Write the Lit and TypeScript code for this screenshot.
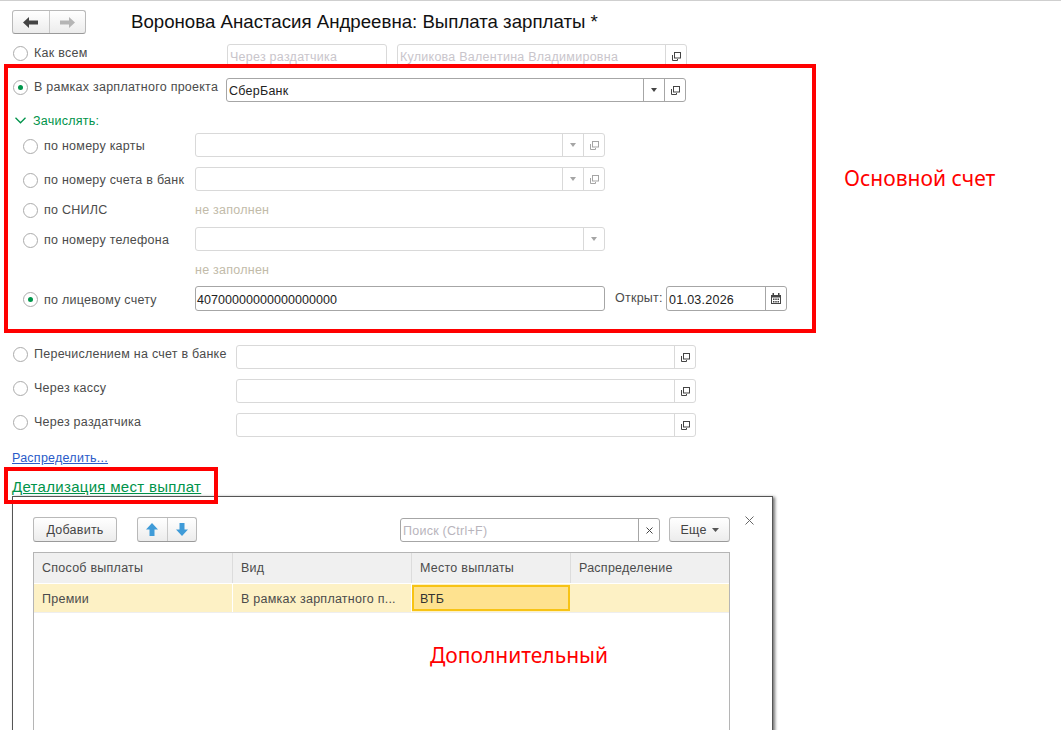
import { LitElement, html, css, svg } from "lit";
import { customElement } from "lit/decorators.js";

const openIcon = svg`<svg class="ic" width="9" height="9" viewBox="0 0 9 9" fill="none" stroke="currentColor"><rect x="2.5" y=".5" width="6" height="5.5"/><path d="M.5 3v5.5h5V7"/></svg>`;
const tri = svg`<svg class="ic" width="6" height="4" viewBox="0 0 6 4" fill="currentColor"><path d="M0 0h6L3 4z"/></svg>`;
const cal = svg`<svg class="ic" width="10" height="11" viewBox="0 0 10 11" fill="currentColor"><path d="M0 2h1.500V0h1.500v2h4V0h1.500v2H10v9H0zM1 4.500v5.500h8V4.500z"/><path d="M2 5.500h1.500v1.500H2zM4.250 5.500h1.500v1.500h-1.500zM6.500 5.500H8v1.500H6.500zM2 8h1.500v1.500H2zM4.250 8h1.500v1.500h-1.500zM6.500 8H8v1.500H6.500z"/></svg>`;

type Btn = "tri" | "open" | "cal" | "x";

@customElement("app-root")
export class AppRoot extends LitElement {
  static styles = css`
    :host {
      display: block; position: relative; width: 1061px; height: 730px; overflow: hidden;
      background: #fff; font-family: "Liberation Sans", Arial, sans-serif; font-size: 12.5px; color: #4b4b4b;
      letter-spacing: .25px;
    }
    * { box-sizing: border-box; }
    .topline { height: 1px; background: #cfcfcf; }
    .head { display: flex; align-items: center; padding: 9px 0 0 12px; height: 33px; }
    .nav { display: flex; width: 74px; height: 24px; border: 1px solid #b9b9b9; border-bottom-color: #9a9a9a; border-radius: 3px; background: linear-gradient(#fff, #ececec); }
    .nav span { flex: 1; display: flex; align-items: center; justify-content: center; }
    .nav span + span { border-left: 1px solid #c8c8c8; }
    .title { margin-left: 45px; font-size: 18.67px; color: #111; letter-spacing: 0; white-space: nowrap; }
    .row { display: flex; margin-left: 12px; }
    .h24 { height: 24px; }
    .h25 { height: 25px; }
    .h16 { height: 16px; align-items: center; }
    .mt5 { margin-top: 5px; }
    .mt9 { margin-top: 9px; }
    .mt10 { margin-top: 10px; }
    .mt12 { margin-top: 12px; }
    .mt34 { margin-top: 34px; }
    .sub { margin-left: 23px; align-items: center; }
    .radio { flex: none; width: 15px; height: 15px; margin-left: 1px; border: 1px solid #ababab; border-radius: 50%; background: #fff; display: flex; align-items: center; justify-content: center; }
    .sub .radio { margin-left: 0; }
    .radio.on::after { content: ""; width: 5px; height: 5px; border-radius: 50%; background: #00964b; }
    .opt { display: flex; align-items: center; height: 17px; padding-top: 1px; gap: 6px; white-space: nowrap; }
    .sub .opt { height: 18px; padding-top: 2px; }
    .lab-a { width: 215px; }
    .lab-b { width: 214px; }
    .lab-c { width: 224px; }
    .lab-s { width: 172px; flex: none; }
    .hint { color: #c2bba9; line-height: 18px; padding-top: 2px; }
    .field { display: flex; height: 100%; border: 1px solid #d9d9d9; border-radius: 3px; background: #fff; align-items: center; overflow: hidden; color: #c9c5cb; }
    .field.act { border-color: #a6a6a6; color: #222; }
    .field .v { flex: 1; padding: 2px 0 0 2px; white-space: nowrap; overflow: hidden; min-width: 0; }
    .field.num .v { letter-spacing: .05px; padding-left: 1px; }
    .field .b { flex: none; width: 21px; height: 100%; border-left: 1px solid #d9d9d9; display: flex; align-items: center; justify-content: center; color: #a5a5a5; }
    .field.act .b { border-left-color: #a6a6a6; color: #444; }
    .field.dark .b { color: #444; }
    .f160 { width: 160px; }
    .f289 { width: 290px; margin-left: 10px; }
    .f460 { width: 460px; }
    .f410 { width: 410px; }
    .f121 { width: 121px; }
    .open-l { flex: none; width: 51px; margin-left: 10px; line-height: 25px; white-space: nowrap; }
    .ic { display: block; }
    .green { color: #00934a; margin-left: 3px; gap: 7px; }
    .link { color: #2a5bc9; text-decoration: underline; white-space: nowrap; padding-top: 2px; }
    .detail { margin: 13px 0 0 12px; height: 18px; font-size: 15px; line-height: 17px; color: #00934a; text-decoration: underline; letter-spacing: .3px; white-space: nowrap; }
    .win { position: relative; margin-left: 12px; width: 761px; height: 240px; border: 1px solid #555; border-bottom: 0; background: #fff; box-shadow: 2px 1px 3px rgba(0,0,0,.55); padding: 20px 42px 0 20px; }
    .close { position: absolute; left: 731px; top: 18px; width: 11px; height: 11px; color: #666; }
    .tb { display: flex; height: 25px; }
    .btn { height: 25px; border: 1px solid #b9b9b9; border-bottom-color: #9a9a9a; border-radius: 3px; background: linear-gradient(#fff, #ececec); display: flex; align-items: center; justify-content: center; color: #444; }
    .add { width: 84px; }
    .updown { width: 60px; margin-left: 20px; padding: 0; }
    .updown span { flex: 1; height: 100%; display: flex; align-items: center; justify-content: center; }
    .updown span + span { border-left: 1px solid #c8c8c8; }
    .search { width: 260px; margin-left: 203px; height: 24px; margin-top: 1px; }
    .search.field .v { color: #b8b4bc; }
    .more { width: 61px; margin-left: 9px; gap: 5px; }
    .tbl { margin-top: 10px; height: 200px; border: 1px solid #b5b5b5; border-bottom: 0; }
    .tr { display: grid; grid-template-columns: 199px 179px 159px 1fr; }
    .th { height: 31px; background: #f0f0f0; border-bottom: 1px solid #fff; }
    .th div { display: flex; align-items: center; padding-left: 8px; border-right: 1px solid #dcdcdc; padding-bottom: 1px; }
    .th div:last-child { border-right: 0; }
    .td { height: 29px; background: #fdf1c5; border-bottom: 1px solid #eee; }
    .td div { display: flex; align-items: center; padding: 2px 0 0 8px; border-right: 1px solid #fff; white-space: nowrap; overflow: hidden; }
    .td div:last-child { border-right: 0; }
    .td .sel { background: #fee28f; border: 2px solid #f7c315; padding: 1px 0 0 6px; color: #333; margin: 1px 1px 0 0; height: 26px; }
    .red { position: absolute; border: 4px solid #ff0000; pointer-events: none; }
    .r1 { left: 4px; top: 64px; width: 812px; height: 269px; }
    .r2 { left: 4px; top: 467px; width: 214px; height: 37px; }
    .ann { position: absolute; color: #ff0000; font-family: "Noto Sans", sans-serif; font-size: 21px; letter-spacing: 0; white-space: nowrap; line-height: 24px; }
    .a1 { left: 844px; top: 166px; }
    .a2 { left: 430px; top: 643px; }
  `;

  private field(cls: string, value: string, btns: Btn[]) {
    const icons = { tri, open: openIcon, cal, x: svg`<svg class="ic" width="7" height="7" viewBox="0 0 7 7" stroke="currentColor" fill="none"><path d="M.5.5l6 6M6.5.5l-6 6"/></svg>` };
    return html`<div class="field ${cls}"><div class="v">${value}</div>${btns.map((b) => html`<div class="b">${icons[b]}</div>`)}</div>`;
  }

  private opt(label: string, cls: string, on = false) {
    return html`<div class="opt ${cls}"><span class="radio ${on ? "on" : ""}"></span><span>${label}</span></div>`;
  }

  render() {
    return html`
      <div class="topline"></div>
      <div class="head">
        <div class="nav">
          <span><svg width="15" height="11" viewBox="0 0 15 11" fill="#444"><path d="M0 5.500L6 0v3.500h9v4H6V11z"/></svg></span>
          <span><svg width="15" height="11" viewBox="0 0 15 11" fill="#b5b5b5"><path d="M15 5.500L9 0v3.500H0v4h9V11z"/></svg></span>
        </div>
        <div class="title">Воронова Анастасия Андреевна: Выплата зарплаты *</div>
      </div>

      <div class="row h24 mt10">
        ${this.opt("Как всем", "lab-a")}
        ${this.field("f160", "Через раздатчика", [])}
        ${this.field("f289 dark", "Куликова Валентина Владимировна", ["open"])}
      </div>
      <div class="row h24 mt10">
        ${this.opt("В рамках зарплатного проекта", "lab-b", true)}
        ${this.field("f460 act", "СберБанк", ["tri", "open"])}
      </div>
      <div class="row h16 mt10">
        <div class="opt green">
          <svg width="11" height="7" viewBox="0 0 11 7" fill="none" stroke="#00934a" stroke-width="1.300"><path d="M.5.8l5 5 5-5"/></svg>
          <span>Зачислять:</span>
        </div>
      </div>
      <div class="row sub h24 mt5">
        ${this.opt("по номеру карты", "lab-s")}
        ${this.field("f410", "", ["tri", "open"])}
      </div>
      <div class="row sub h24 mt10">
        ${this.opt("по номеру счета в банк", "lab-s")}
        ${this.field("f410", "", ["tri", "open"])}
      </div>
      <div class="row sub h16 mt10">
        ${this.opt("по СНИЛС", "lab-s")}
        <span class="hint">не заполнен</span>
      </div>
      <div class="row sub h24 mt10">
        ${this.opt("по номеру телефона", "lab-s")}
        ${this.field("f410", "", ["tri"])}
      </div>
      <div class="row sub h16 mt10">
        <div class="lab-s"></div>
        <span class="hint">не заполнен</span>
      </div>
      <div class="row sub h25 mt9">
        ${this.opt("по лицевому счету", "lab-s", true)}
        ${this.field("f410 act num", "40700000000000000000", [])}
        <span class="open-l">Открыт:</span>
        ${this.field("f121 act", "01.03.2026", ["cal"])}
      </div>

      <div class="row h24 mt34">
        ${this.opt("Перечислением на счет в банке", "lab-c")}
        ${this.field("f460 dark", "", ["open"])}
      </div>
      <div class="row h24 mt10">
        ${this.opt("Через кассу", "lab-c")}
        ${this.field("f460 dark", "", ["open"])}
      </div>
      <div class="row h24 mt10">
        ${this.opt("Через раздатчика", "lab-c")}
        ${this.field("f460 dark", "", ["open"])}
      </div>
      <div class="row h16 mt12"><span class="link">Распределить...</span></div>
      <div class="detail">Детализация мест выплат</div>

      <div class="win">
        <svg class="close" viewBox="0 0 11 11" fill="none" stroke="currentColor"><path d="M1.500 1.500l8 8M9.500 1.500l-8 8"/></svg>
        <div class="tb">
          <div class="btn add">Добавить</div>
          <div class="btn updown">
            <span><svg width="12" height="13" viewBox="0 0 12 13" fill="#3f9bd8"><path d="M6 0l6 6.500H8.500V13h-5V6.500H0z"/></svg></span>
            <span><svg width="12" height="13" viewBox="0 0 12 13" fill="#3f9bd8"><path d="M6 13L0 6.500h3.500V0h5v6.500H12z"/></svg></span>
          </div>
          ${this.field("search act", "Поиск (Ctrl+F)", ["x"])}
          <div class="btn more">Еще <svg class="ic" width="7" height="4" viewBox="0 0 7 4" fill="#555"><path d="M0 0h7L3.500 4z"/></svg></div>
        </div>
        <div class="tbl">
          <div class="tr th"><div>Способ выплаты</div><div>Вид</div><div>Место выплаты</div><div>Распределение</div></div>
          <div class="tr td"><div>Премии</div><div>В рамках зарплатного п...</div><div class="sel">ВТБ</div><div></div></div>
        </div>
      </div>

      <div class="red r1"></div>
      <div class="red r2"></div>
      <div class="ann a1">Основной счет</div>
      <div class="ann a2">Дополнительный</div>
    `;
  }
}
